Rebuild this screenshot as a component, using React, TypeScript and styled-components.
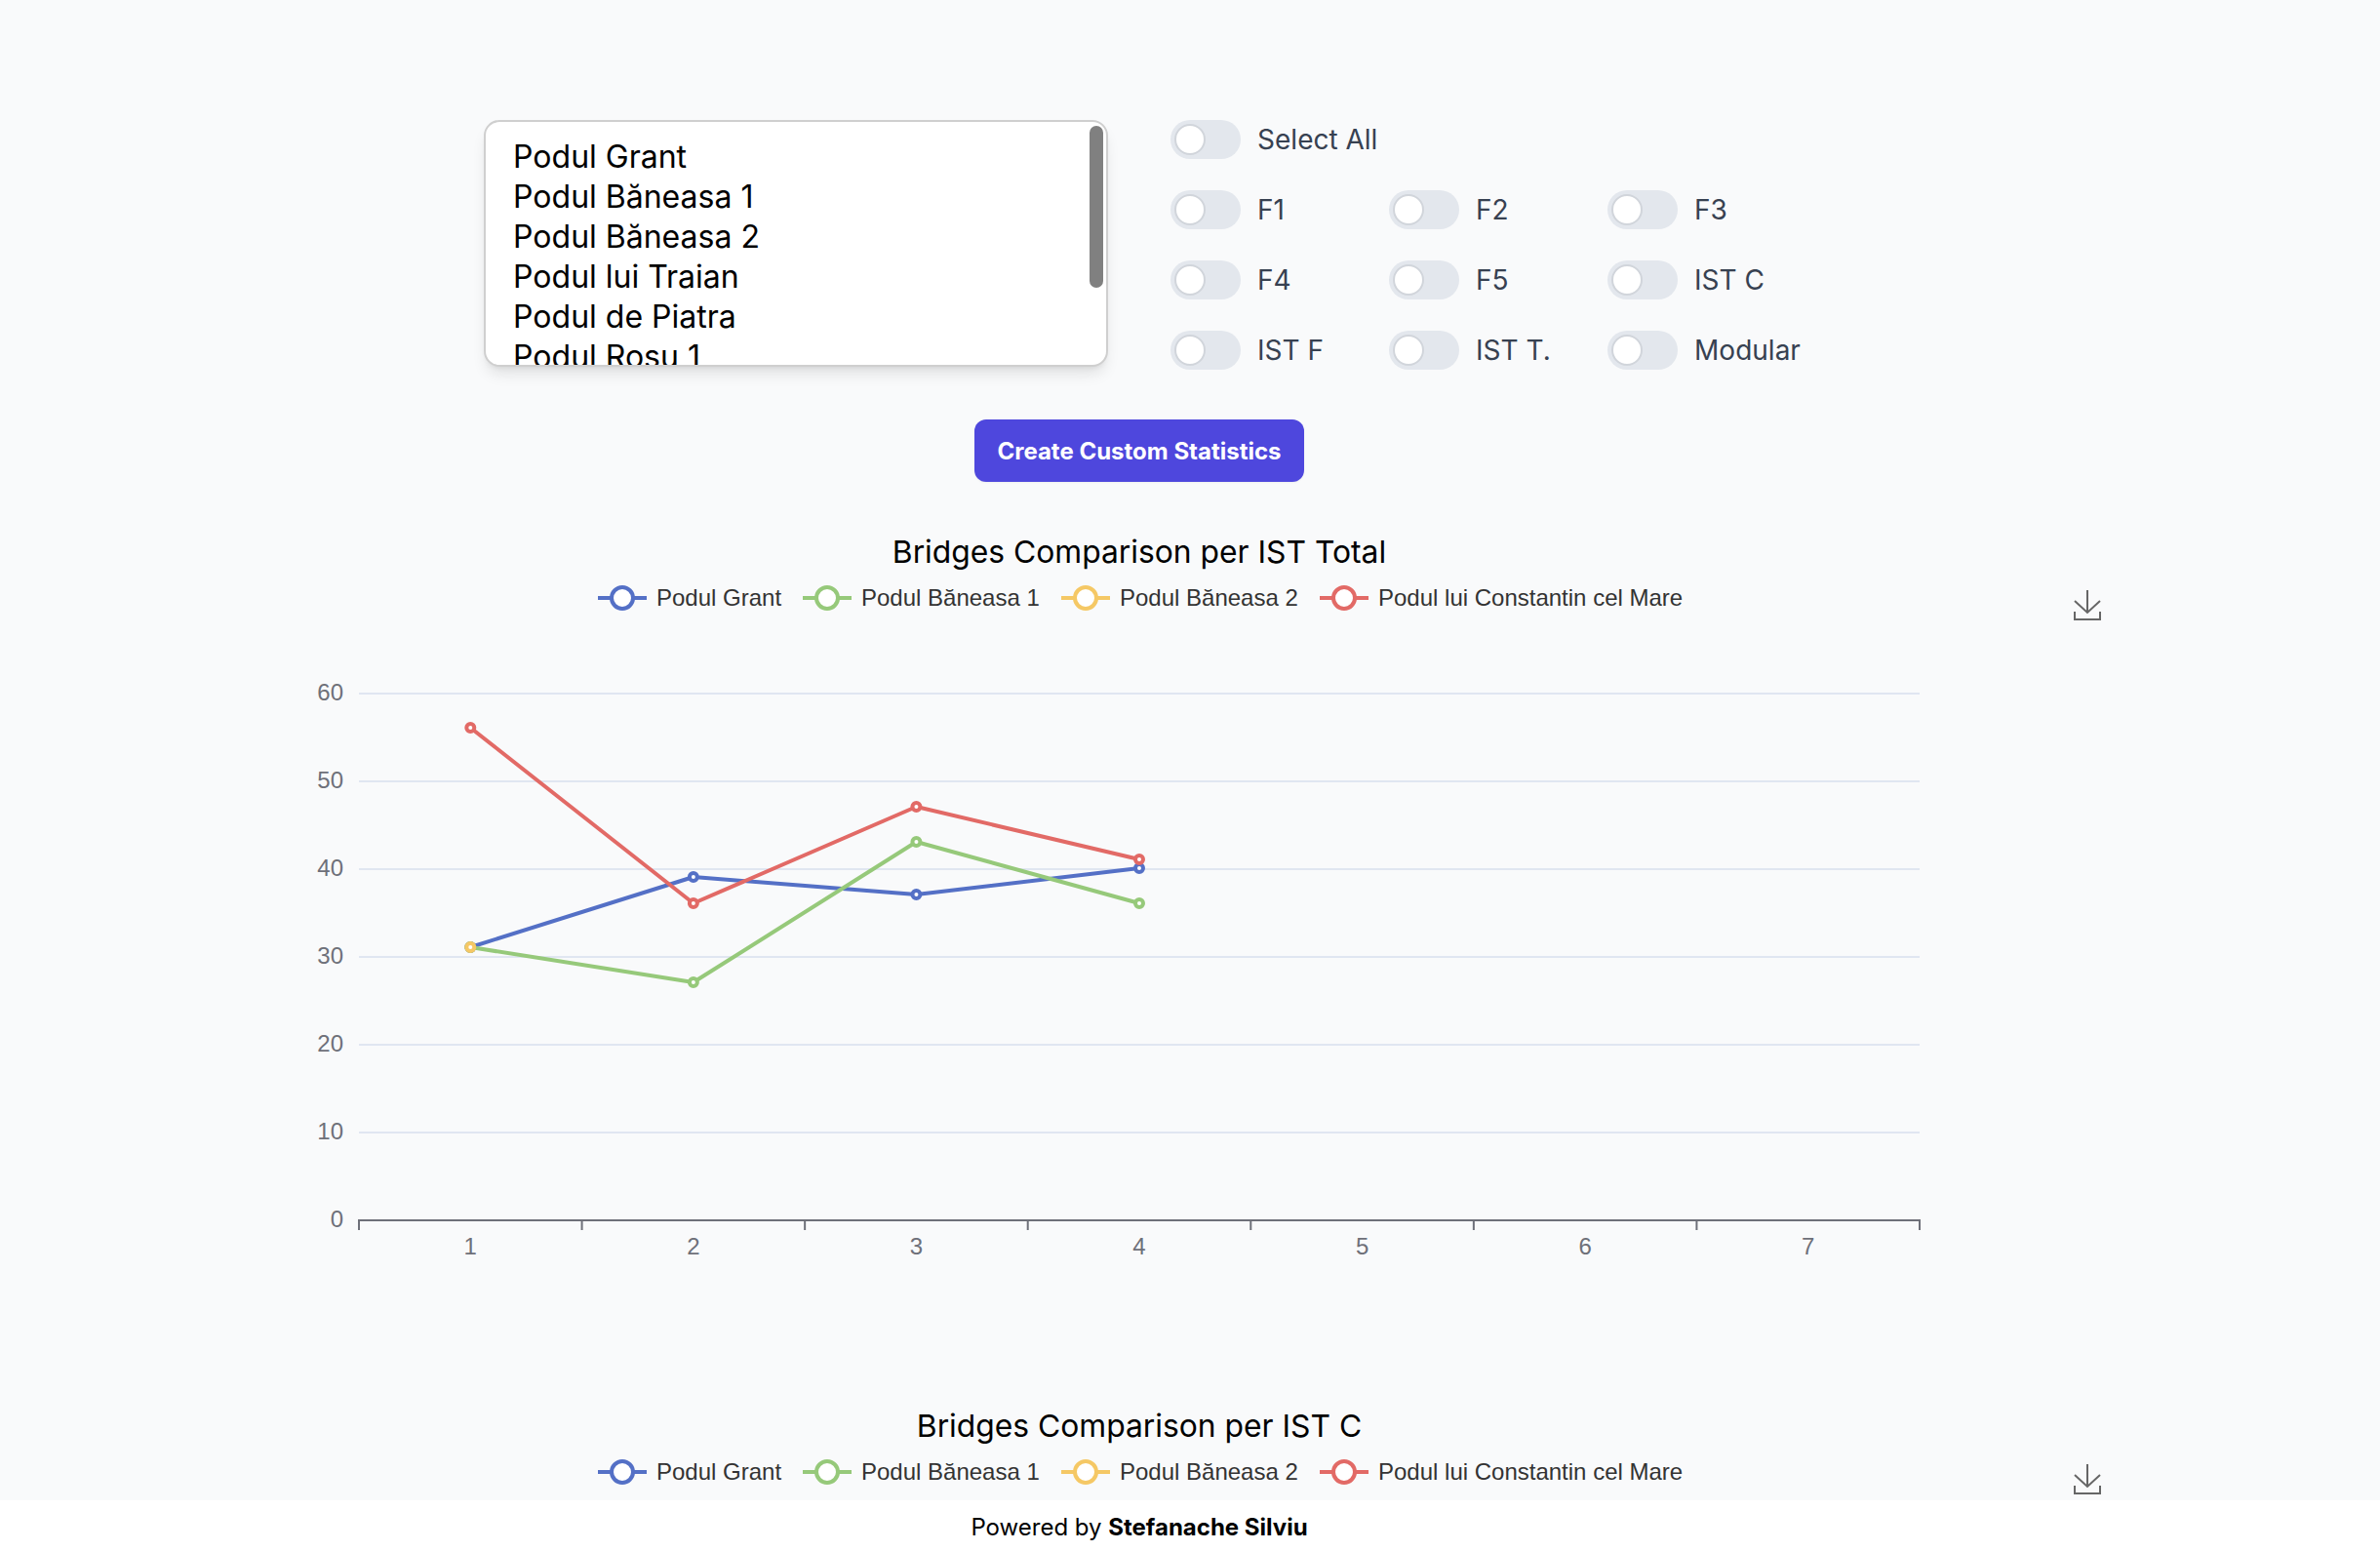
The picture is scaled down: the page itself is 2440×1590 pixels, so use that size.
import React from "react";
import styled, { createGlobalStyle } from "styled-components";

const GlobalStyle = createGlobalStyle`
  html, body {
    margin: 0;
    padding: 0;
    background: #ffffff;
  }
`;

const Page = styled.div`
  display: flex;
  flex-direction: column;
  height: 100vh;
  overflow: hidden;
  font-family: Inter, "Liberation Sans", sans-serif;
`;

const Main = styled.main`
  flex: 1;
  min-height: 0;
  overflow: hidden;
  background: #f9fafb;
  padding: 123px 102px 0 0;
`;

const Controls = styled.section`
  display: flex;
  justify-content: center;
  gap: 64px;
  padding-left: 4px;
`;

const ListBox = styled.div`
  position: relative;
  box-sizing: border-box;
  width: 640px;
  height: 253px;
  border: 2px solid #cfcfcf;
  border-radius: 16px;
  background: #ffffff;
  box-shadow: 0 10px 15px -3px rgba(0, 0, 0, 0.1), 0 4px 6px -4px rgba(0, 0, 0, 0.1);
  overflow: hidden;
`;

const BridgeList = styled.ul`
  list-style: none;
  margin: 0;
  padding: 15px 28px;
  font-size: 32px;
  line-height: 41px;
  color: #000000;
`;

const ScrollThumb = styled.div`
  position: absolute;
  top: 4px;
  right: 3px;
  width: 14px;
  height: 166px;
  border-radius: 7px;
  background: #808080;
`;

const Filters = styled.div`
  display: flex;
  flex-direction: column;
  gap: 32px;
`;

const FilterGrid = styled.div`
  display: grid;
  grid-template-columns: 224px 224px auto;
  row-gap: 32px;
`;

const ToggleRow = styled.label`
  display: flex;
  align-items: center;
  gap: 17px;
  height: 40px;
  font-size: 28px;
  color: #374151;
`;

const Track = styled.span`
  position: relative;
  display: block;
  width: 72px;
  height: 40px;
  border-radius: 20px;
  background: #e3e7ed;
`;

const Knob = styled.span`
  position: absolute;
  top: 4px;
  left: 4px;
  box-sizing: border-box;
  width: 32px;
  height: 32px;
  border: 2px solid #d1d5db;
  border-radius: 50%;
  background: #ffffff;
`;

const ButtonRow = styled.div`
  display: flex;
  justify-content: center;
  margin-top: 51px;
  padding-right: 2px;
`;

const CreateButton = styled.button`
  width: 338px;
  height: 64px;
  border: none;
  border-radius: 12px;
  background: #4e47dd;
  box-shadow: 0 1px 2px rgba(0, 0, 0, 0.05);
  color: #ffffff;
  font-family: Inter, "Liberation Sans", sans-serif;
  font-size: 24px;
  font-weight: 700;
`;

const ChartFrame = styled.figure`
  display: block;
  width: 2000px;
  height: 800px;
  margin: 36px auto 96px;

  & + & {
    margin-top: 0;
  }

  svg {
    display: block;
  }
`;

const Footer = styled.footer`
  box-sizing: border-box;
  flex: none;
  height: 52px;
  padding-right: 104px;
  background: #ffffff;
  color: #000000;
  font-size: 24px;
  line-height: 56px;
  text-align: center;

  strong {
    font-weight: 700;
  }
`;

const bridges = [
  { name: "Podul Grant", color: "#5470c6", x: 0, values: [31, 39, 37, 40] },
  { name: "Podul Băneasa 1", color: "#96c97a", x: 210, values: [31, 27, 43, 36] },
  { name: "Podul Băneasa 2", color: "#f5c865", x: 475, values: [31] },
  { name: "Podul lui Constantin cel Mare", color: "#e26a66", x: 740, values: [56, 36, 47, 41] },
];

const bridgeNames = [
  "Podul Grant",
  "Podul Băneasa 1",
  "Podul Băneasa 2",
  "Podul lui Traian",
  "Podul de Piatra",
  "Podul Rosu 1",
];

const filterNames = ["F1", "F2", "F3", "F4", "F5", "IST C", "IST F", "IST T.", "Modular"];

// chart canvas sizes, the drawing starts at 169px across the page
const GRID_LEFT = 199;
const GRID_RIGHT = 1799;
const GRID_BOTTOM = 721;
const STEP = (GRID_RIGHT - GRID_LEFT) / 7;
const pointX = (i: number) => GRID_LEFT + STEP * (i + 0.5);
const pointY = (v: number) => GRID_BOTTOM - v * 9;

const Toggle: React.FC<{ label: string }> = ({ label }) => (
  <ToggleRow>
    <Track>
      <Knob />
    </Track>
    {label}
  </ToggleRow>
);

const LineChart: React.FC<{ title: string; data: typeof bridges }> = ({ title, data }) => (
  <ChartFrame>
    <svg width="2000" height="800" viewBox="0 0 2000 800" fontFamily="'Liberation Sans', sans-serif">
      <text x="999" y="47" fontSize="31.8" fontFamily="Inter, sans-serif" textAnchor="middle" fill="#000000">
        {title}
      </text>

      {bridges.map((b) => (
        <g key={b.name} transform={`translate(${444 + b.x} 0)`}>
          <line x1="0" x2="50" y1="83" y2="83" stroke={b.color} strokeWidth="4" />
          <circle cx="25" cy="83" r="11" fill="#ffffff" stroke={b.color} strokeWidth="4" />
          <text x="60" y="91" fontSize="24" fill="#333333">
            {b.name}
          </text>
        </g>
      ))}

      <g fill="none" stroke="#666666" strokeWidth="2">
        <path d="M1971 75V98M1958 86L1971 98L1984 86" />
        <path d="M1958 97V105H1984V97" />
      </g>

      {[10, 20, 30, 40, 50, 60].map((v) => (
        <line key={v} x1={GRID_LEFT} x2={GRID_RIGHT} y1={pointY(v)} y2={pointY(v)} stroke="#e0e6f1" strokeWidth="2" />
      ))}
      {[0, 10, 20, 30, 40, 50, 60].map((v) => (
        <text key={v} x={GRID_LEFT - 16} y={pointY(v) + 7} fontSize="24" textAnchor="end" fill="#6e7079">
          {v}
        </text>
      ))}

      <line x1={GRID_LEFT - 1} x2={GRID_RIGHT + 1} y1={GRID_BOTTOM} y2={GRID_BOTTOM} stroke="#6e7079" strokeWidth="2" />
      {[0, 1, 2, 3, 4, 5, 6, 7].map((i) => (
        <line
          key={i}
          x1={GRID_LEFT + STEP * i}
          x2={GRID_LEFT + STEP * i}
          y1={GRID_BOTTOM}
          y2={GRID_BOTTOM + 10}
          stroke="#6e7079"
          strokeWidth="2"
        />
      ))}
      {[1, 2, 3, 4, 5, 6, 7].map((n, i) => (
        <text key={n} x={pointX(i)} y={GRID_BOTTOM + 35} fontSize="24" textAnchor="middle" fill="#6e7079">
          {n}
        </text>
      ))}

      {data.map((b) => (
        <g key={b.name} transform="translate(0 -1)">
          <polyline
            points={b.values.map((v, i) => `${pointX(i)},${pointY(v)}`).join(" ")}
            fill="none"
            stroke={b.color}
            strokeWidth="4"
            strokeLinejoin="round"
          />
          {b.values.map((v, i) => (
            <circle key={i} cx={pointX(i)} cy={pointY(v)} r="4" fill="#ffffff" stroke={b.color} strokeWidth="4" />
          ))}
        </g>
      ))}
    </svg>
  </ChartFrame>
);

const App: React.FC = () => {
  return (
    <Page>
      <GlobalStyle />
      <Main>
        <Controls>
          <ListBox>
            <BridgeList>
              {bridgeNames.map((name) => (
                <li key={name}>{name}</li>
              ))}
            </BridgeList>
            <ScrollThumb />
          </ListBox>
          <Filters>
            <Toggle label="Select All" />
            <FilterGrid>
              {filterNames.map((name) => (
                <Toggle key={name} label={name} />
              ))}
            </FilterGrid>
          </Filters>
        </Controls>
        <ButtonRow>
          <CreateButton>Create Custom Statistics</CreateButton>
        </ButtonRow>
        <LineChart title="Bridges Comparison per IST Total" data={bridges} />
        <LineChart title="Bridges Comparison per IST C" data={[]} />
      </Main>
      <Footer>
        Powered by <strong>Stefanache Silviu</strong>
      </Footer>
    </Page>
  );
};

export default App;
